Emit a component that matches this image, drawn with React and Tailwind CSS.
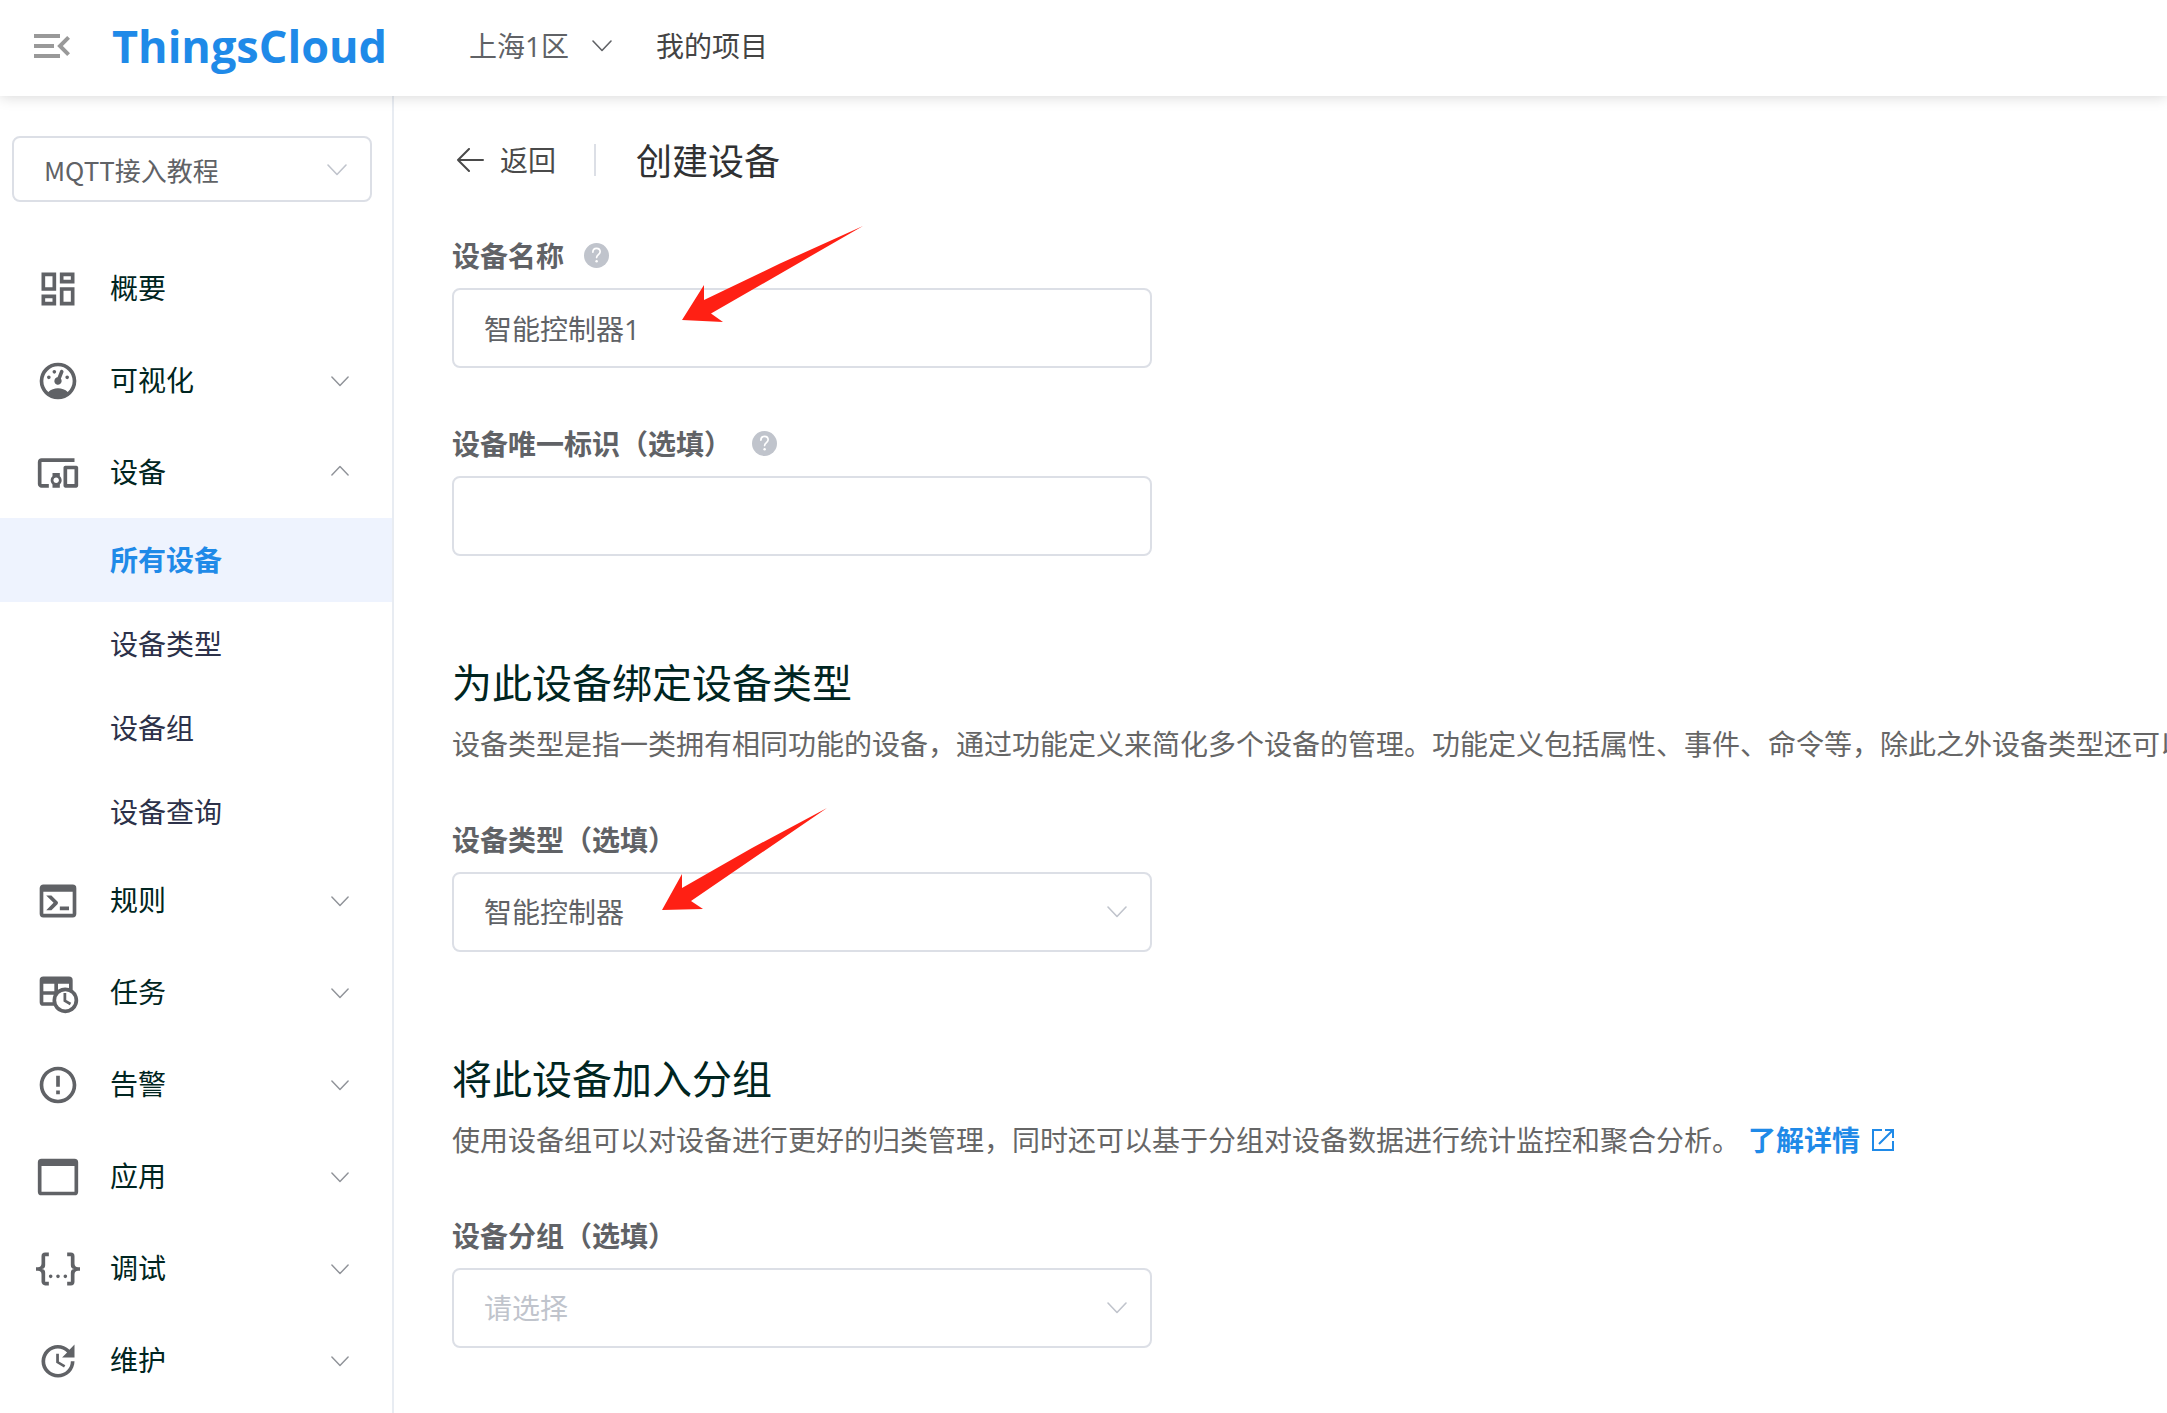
import {useState} from 'react';
import {MdMenuOpen, MdOutlineDashboard, MdDevicesOther, MdErrorOutline} from 'react-icons/md';

// Paths for the menu icons that are not in react-icons/md, all on a 24 grid
const GAUGE = "M12,2A10,10 0 0,0 2,12A10,10 0 0,0 12,22A10,10 0 0,0 22,12A10,10 0 0,0 12,2M12,4A8,8 0 0,1 20,12C20,14.4 19,16.5 17.3,18C15.9,16.7 14,16 12,16C10,16 8.2,16.7 6.7,18C5,16.5 4,14.4 4,12A8,8 0 0,1 12,4M14,5.89C13.62,5.9 13.26,6.15 13.1,6.54L11.81,9.77L11.71,10C11,10.13 10.41,10.6 10.14,11.26C9.73,12.29 10.23,13.45 11.26,13.86C12.29,14.27 13.45,13.77 13.86,12.74C14.12,12.08 14,11.32 13.57,10.76L13.67,10.5L14.96,7.29L14.97,7.26C15.17,6.75 14.92,6.17 14.41,5.96C14.28,5.91 14.15,5.89 14,5.89M10,6A1,1 0 0,0 9,7A1,1 0 0,0 10,8A1,1 0 0,0 11,7A1,1 0 0,0 10,6M7,9A1,1 0 0,0 6,10A1,1 0 0,0 7,11A1,1 0 0,0 8,10A1,1 0 0,0 7,9M17,9A1,1 0 0,0 16,10A1,1 0 0,0 17,11A1,1 0 0,0 18,10A1,1 0 0,0 17,9Z";
const CONSOLE = "M20,19V7H4V19H20M20,3A2,2 0 0,1 22,5V19A2,2 0 0,1 20,21H4A2,2 0 0,1 2,19V5C2,3.89 2.9,3 4,3H20M13,17V15H18V17H13M9.58,13L5.57,9H8.4L11.7,12.3C12.09,12.69 12.09,13.33 11.7,13.72L8.42,17H5.59L9.58,13Z";
const TABLE_CLOCK = "M4,3H18A2,2 0 0,1 20,5V10.25A7,7 0 0,1 16,23A7,7 0 0,1 9.67,19H4A2,2 0 0,1 2,17V5A2,2 0 0,1 4,3M4,7V11H10V7H4M12,7V10.25A7,7 0 0,1 18,9.29V7H12M4,13V17H9.07A7,7 0 0,1 9.67,13H4M16,11A5,5 0 0,0 11,16A5,5 0 0,0 16,21A5,5 0 0,0 21,16A5,5 0 0,0 16,11M15,12H16.5V15.82L19.19,17.37L18.44,18.67L15,16.69V12Z";
const WINDOW = "M3,2H21A2,2 0 0,1 23,4V20A2,2 0 0,1 21,22H3A2,2 0 0,1 1,20V4A2,2 0 0,1 3,2M3,6V20H21V6H3Z";
const JSON_BRACES = "M5,3H7V5H5V10A2,2 0 0,1 3,12A2,2 0 0,1 5,14V19H7V21H5C3.93,20.73 3,20.1 3,19V15A2,2 0 0,0 1,13H0V11H1A2,2 0 0,0 3,9V5A2,2 0 0,1 5,3M19,3A2,2 0 0,1 21,5V9A2,2 0 0,0 23,11H24V13H23A2,2 0 0,0 21,15V19A2,2 0 0,1 19,21H17V19H19V14A2,2 0 0,1 21,12A2,2 0 0,1 19,10V5H17V3H19M12,15A1,1 0 0,1 13,16A1,1 0 0,1 12,17A1,1 0 0,1 11,16A1,1 0 0,1 12,15M8,15A1,1 0 0,1 9,16A1,1 0 0,1 8,17A1,1 0 0,1 7,16A1,1 0 0,1 8,15M16,15A1,1 0 0,1 17,16A1,1 0 0,1 16,17A1,1 0 0,1 15,16A1,1 0 0,1 16,15Z";
const UPDATE = "M21,10.12H14.22L16.96,7.3C14.23,4.6 9.81,4.5 7.08,7.2C4.35,9.91 4.35,14.28 7.08,17C9.81,19.7 14.23,19.7 16.96,17C18.32,15.65 19,14.08 19,12.1H21C21,14.08 20.12,16.65 18.36,18.39C14.85,21.87 9.15,21.87 5.64,18.39C2.14,14.92 2.11,9.28 5.62,5.81C9.13,2.34 14.76,2.34 18.27,5.81L21,3V10.12M12.5,8V12.25L16,14.33L15.28,15.54L11,13V8H12.5Z";

const menuItems = [
    {name: "概要", icon: <MdOutlineDashboard className="size-11"/>, leaf: true},
    {name: "可视化", icon: <MenuIcon d={GAUGE}/>},
    {
        name: "设备",
        icon: <MdDevicesOther className="size-11"/>,
        children: ["所有设备", "设备类型", "设备组", "设备查询"]
    },
    {name: "规则", icon: <MenuIcon d={CONSOLE}/>},
    {name: "任务", icon: <MenuIcon d={TABLE_CLOCK}/>},
    {name: "告警", icon: <MdErrorOutline className="size-11"/>},
    {name: "应用", icon: <MenuIcon d={WINDOW}/>},
    {name: "调试", icon: <MenuIcon d={JSON_BRACES}/>},
    {name: "维护", icon: <MenuIcon d={UPDATE}/>},
];

function MenuIcon({d}) {
    return (
        <svg className="size-11" viewBox="0 0 24 24" fill="currentColor" fillRule="evenodd" aria-hidden="true">
            <path d={d}/>
        </svg>
    );
}

function Chevron({className}) {
    return (
        <svg className={className} viewBox="0 0 20 12" fill="none" stroke="currentColor" strokeWidth="1.6"
             strokeLinecap="round" strokeLinejoin="round" aria-hidden="true">
            <path d="M1 1l9 9.500L19 1"/>
        </svg>
    );
}

function HelpIcon() {
    return (
        <svg className="mb-0.5 size-[25px] text-[#c0c4cc]" viewBox="0 0 24 24" fill="none" aria-hidden="true">
            <circle cx="12" cy="12" r="12" fill="currentColor"/>
            <path d="M8.500 8.900c0-2.200 1.500-3.700 3.500-3.700s3.500 1.400 3.500 3.300c0 2.700-3.400 2.700-3.400 5.500" stroke="#fff"
                  strokeWidth="1.6" strokeLinecap="round"/>
            <circle cx="12.1" cy="17.6" r="1.200" fill="#fff"/>
        </svg>
    );
}

function Header() {
    return (
        <header className="relative z-10 flex h-24 items-center bg-white pb-1 pl-7 text-[28px] shadow-[0_0_14px_rgba(0,0,0,0.18)]">
            <button type="button" aria-label="收起菜单" className="text-[#999999]">
                <MdMenuOpen className="size-12"/>
            </button>
            <a href="#" className="ml-9 w-[357px] font-['Open_Sans'] text-[45px] font-bold text-[#1f8ae8]">ThingsCloud</a>
            <button type="button" className="flex items-center gap-[22px] text-[#606266]">
                上海1区
                <Chevron className="h-3 w-[22px]"/>
            </button>
            <a href="#" className="ml-[43px] text-[#444444]">我的项目</a>
        </header>
    );
}

function Sidebar() {
    const [opened, setOpened] = useState("设备");

    return (
        <aside className="w-[394px] shrink-0 border-r-2 border-[#e8ecf2] pt-10">
            <div className="relative ml-3 mr-5">
                <select aria-label="项目"
                        className="h-[66px] w-full appearance-none rounded-lg border-2 border-[#dcdfe6] bg-white pl-[30px] font-['Noto_Sans_CJK_SC',sans-serif] text-[26px] text-[#606266]">
                    <option>MQTT接入教程</option>
                </select>
                <Chevron className="pointer-events-none absolute right-6 top-7 h-3 w-[22px] text-[#c0c4cc]"/>
            </div>
            <nav className="mt-10 text-[28px]">
                {menuItems.map((item) => (
                    <div key={item.name}>
                        <button
                            type="button"
                            className="flex h-[92px] w-full items-center pl-9 pr-[43px] text-[#002521]"
                            onClick={() => setOpened(opened === item.name ? "" : item.name)}>
                            <span className="mt-0.5 text-[#606266]">{item.icon}</span>
                            <span className="ml-[30px] grow text-left">{item.name}</span>
                            {!item.leaf &&
                                <Chevron
                                    className={"h-[11px] w-[18px] text-[#909399] " + (item.children && opened === item.name ? "mb-1 rotate-180" : "mt-0.5")}/>
                            }
                        </button>
                        {item.children && opened === item.name && item.children.map((child, i) => (
                            <a
                                key={child}
                                href="#"
                                className={"flex h-21 items-center pl-[110px] " + (i === 0 ? "bg-[#eef3fe] font-bold text-[#1f8ae8]" : "text-[#2c3149]")}>
                                {child}
                            </a>
                        ))}
                    </div>
                ))}
            </nav>
        </aside>
    );
}

/**
 * One labelled row of the form
 * @param id id of the control, ties the label to it
 * @param label text above the control
 * @param help shows the question mark after the label
 */
function Field({id, label, help, children}) {
    return (
        <div>
            <div className="flex h-16 items-center gap-5">
                <label htmlFor={id} className="font-bold text-[#606266]">{label}</label>
                {help && <HelpIcon/>}
            </div>
            <div className="relative max-w-[700px]">{children}</div>
        </div>
    );
}

function SelectBox({id, value, muted}) {
    return (
        <>
            <select id={id}
                    className={"h-20 w-full appearance-none rounded-lg border-2 border-[#dcdfe6] bg-white px-[30px] " + (muted ? "text-[#c0c4cc]" : "text-[#606266]")}>
                <option>{value}</option>
            </select>
            <Chevron className="pointer-events-none absolute right-6 top-[34px] h-3 w-[22px] text-[#c0c4cc]"/>
        </>
    );
}

function SectionHead({title, children}) {
    return (
        <div className="mb-11 mt-[100px]">
            <h2 className="text-[40px] leading-[54px] text-[#002521]">{title}</h2>
            <p className="mt-[14px] flex items-center whitespace-nowrap leading-10 text-[#666666]">{children}</p>
        </div>
    );
}

function App() {
    const [deviceName, setDeviceName] = useState("智能控制器1");
    const [deviceKey, setDeviceKey] = useState("");

    return (
        <div className="flex min-h-screen flex-col overflow-hidden bg-white font-['Open_Sans','Noto_Sans_CJK_SC',sans-serif]">
            <Header/>
            <div className="flex grow">
                <Sidebar/>
                <main className="min-w-0 grow overflow-hidden pl-[58px] pt-10 text-[28px]">
                    <div className="flex h-12 items-center">
                        <a href="#" className="flex items-center gap-4 pl-1 text-[#4a4a4a]">
                            <svg className="h-6 w-7" viewBox="0 0 28 24" fill="none" stroke="currentColor"
                                 strokeWidth="2" strokeLinecap="round" strokeLinejoin="round" aria-hidden="true">
                                <path d="M27 12H2M13 1L2 12l11 11"/>
                            </svg>
                            返回
                        </a>
                        <div className="ml-[38px] h-8 w-0.5 bg-[#dcdfe6]"/>
                        <h1 className="ml-10 pt-1 text-4xl text-[#303133]">创建设备</h1>
                    </div>

                    <form className="mt-10">
                        <Field id="device-name" label="设备名称" help>
                            <input
                                id="device-name"
                                type="text"
                                className="h-20 w-full rounded-lg border-2 border-[#dcdfe6] px-[30px] text-[#606266] outline-none"
                                value={deviceName}
                                onChange={(e) => setDeviceName(e.target.value)}/>
                            {/* red pointer over the name */}
                            <svg className="pointer-events-none absolute -top-[62px] left-[230px] w-[182px]"
                                 viewBox="0 0 182 97" fill="#ff2014" aria-hidden="true">
                                <path d="M0 94L22 59V74L98 37.500L181 0L29 87.500L41 96Z"/>
                            </svg>
                        </Field>
                        <div className="mt-11">
                            <Field id="device-key" label="设备唯一标识（选填）" help>
                                <input
                                    id="device-key"
                                    type="text"
                                    className="h-20 w-full rounded-lg border-2 border-[#dcdfe6] px-[30px] text-[#606266] outline-none"
                                    value={deviceKey}
                                    onChange={(e) => setDeviceKey(e.target.value)}/>
                            </Field>
                        </div>

                        <SectionHead title="为此设备绑定设备类型">
                            设备类型是指一类拥有相同功能的设备，通过功能定义来简化多个设备的管理。功能定义包括属性、事件、命令等，除此之外设备类型还可以
                        </SectionHead>
                        <Field id="device-type" label="设备类型（选填）">
                            <SelectBox id="device-type" value="智能控制器"/>
                            {/* red pointer over the type */}
                            <svg className="pointer-events-none absolute -top-16 left-[210px] w-[166px]"
                                 viewBox="0 0 166 102" fill="#ff2014" aria-hidden="true">
                                <path d="M0 102L20 66V80L90 40L165 0L29 93L41 101Z"/>
                            </svg>
                        </Field>

                        <SectionHead title="将此设备加入分组">
                            使用设备组可以对设备进行更好的归类管理，同时还可以基于分组对设备数据进行统计监控和聚合分析。
                            <a href="#" className="ml-2 flex items-center gap-3 font-bold text-[#1f8ae8]">
                                了解详情
                                <svg className="size-[22px]" viewBox="0 0 22 22" fill="none" stroke="currentColor"
                                     strokeWidth="2" aria-hidden="true">
                                    <path d="M10 1H1v20h20v-9M13 1h8v8M21 1L7 15"/>
                                </svg>
                            </a>
                        </SectionHead>
                        <Field id="device-group" label="设备分组（选填）">
                            <SelectBox id="device-group" value="请选择" muted/>
                        </Field>
                    </form>
                </main>
            </div>
        </div>
    );
}

export default App;
